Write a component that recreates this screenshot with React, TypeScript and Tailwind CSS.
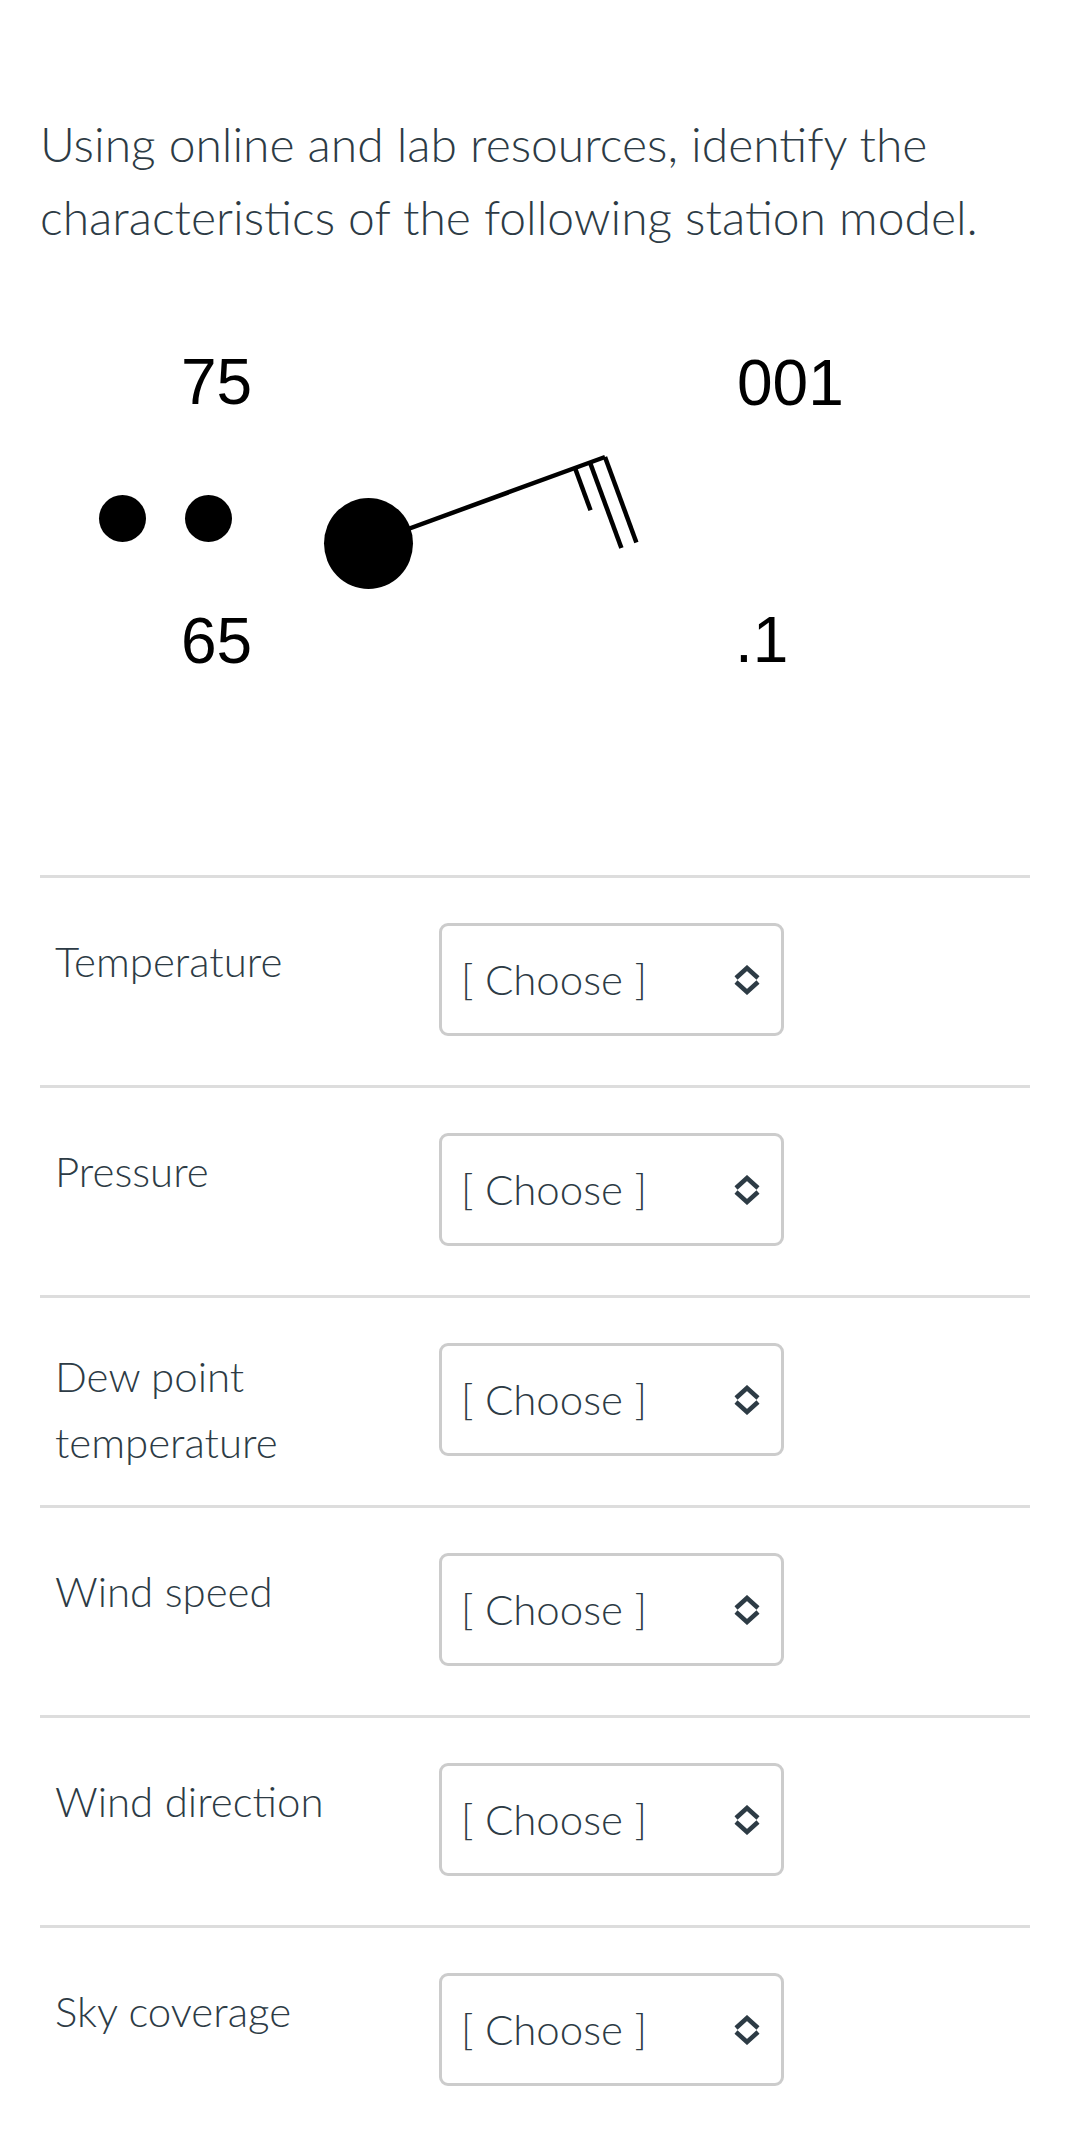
import React from "react";

const rows: { label: string; pt: string }[] = [
  { label: "Temperature", pt: "pt-[5px]" },
  { label: "Pressure", pt: "pt-[5px]" },
  { label: "Dew point temperature", pt: "pt-0" },
  { label: "Wind speed", pt: "pt-[5px]" },
  { label: "Wind direction", pt: "pt-[5px]" },
  { label: "Sky coverage", pt: "pt-[5px]" },
];

function Chevrons() {
  return (
    <svg
      width="28"
      height="30"
      viewBox="0 0 28 30"
      className="pointer-events-none absolute right-[23px] top-1/2 -translate-y-1/2"
      fill="none"
      stroke="#2d3b45"
      strokeWidth="4.5"
    >
      <polyline points="3,13 14,3 25,13" />
      <polyline points="3,17 14,27 25,17" />
    </svg>
  );
}

function StationModel() {
  const ox = 40;
  const oy = 300;
  const p = (x: number, y: number) => [x - ox, y - oy];
  const [c75x, c75y] = p(181, 404);
  const [c65x, c65y] = p(181, 663);
  const [c001x, c001y] = p(737, 405);
  const [c1x, c1y] = p(735, 662);
  const [d1x, d1y] = p(122.5, 518.5);
  const [d2x, d2y] = p(208.5, 518.5);
  const [cx, cy] = p(368.5, 543.5);
  const [ex, ey] = p(605, 457);
  const barb = (sx: number, sy: number, len: number) => {
    const [a, b] = p(sx, sy);
    return [a, b, a + 0.345 * len, b + 0.939 * len];
  };
  const b1 = barb(605, 457, 91);
  const b2 = barb(590, 462.5, 91);
  const b3 = barb(575, 468, 45);
  return (
    <svg width="1000" height="420" viewBox="0 0 1000 420" className="block">
      <g
        fill="#000"
        style={{ fontFamily: '"Liberation Sans", Arial, sans-serif' }}
        fontSize="64"
      >
        <text x={c75x} y={c75y}>75</text>
        <text x={c65x} y={c65y}>65</text>
        <text x={c001x} y={c001y}>001</text>
        <text x={c1x} y={c1y}>.1</text>
      </g>
      <circle cx={d1x} cy={d1y} r="23.5" fill="#000" />
      <circle cx={d2x} cy={d2y} r="23.5" fill="#000" />
      <g stroke="#000" strokeWidth="4.5">
        <line x1={cx} y1={cy} x2={ex} y2={ey} />
        <line x1={b1[0]} y1={b1[1]} x2={b1[2]} y2={b1[3]} />
        <line x1={b2[0]} y1={b2[1]} x2={b2[2]} y2={b2[3]} />
        <line x1={b3[0]} y1={b3[1]} x2={b3[2]} y2={b3[3]} />
      </g>
      <ellipse cx={cx} cy={cy} rx="44.5" ry="45.5" fill="#000" />
    </svg>
  );
}

export default function App() {
  return (
    <div
      className="min-h-[2153px] w-[1081px] bg-white text-[#2d3b45]"
      style={{ fontFamily: 'Lato, "Open Sans", sans-serif' }}
    >
      <div className="pl-[40px] pr-[51px] pt-[107px]">
        <p className="text-[48px] font-light leading-[73px]">
          Using online and lab resources, identify the characteristics of the
          following station model.
        </p>
        <div className="mt-[47px]">
          <StationModel />
        </div>
        <div className="mt-[155px] flex flex-col">
          {rows.map((r) => (
            <div
              key={r.label}
              className="flex h-[210px] items-start border-t-[3px] border-[#dddddd] pt-[45px]"
            >
              <div
                className={`w-[399px] pl-[15px] pr-[20px] text-[42px] font-light leading-[66px] ${r.pt}`}
              >
                {r.label}
              </div>
              <div className="relative h-[113px] w-[345px]">
                <select
                  className="h-full w-full appearance-none rounded-[9px] border-[3px] border-[#cccccc] bg-white pl-[19px] text-[42px] font-light text-[#2d3b45] outline-none"
                  style={{ fontFamily: 'Lato, "Open Sans", sans-serif' }}
                  defaultValue=""
                >
                  <option value="">[ Choose ]</option>
                </select>
                <Chevrons />
              </div>
            </div>
          ))}
        </div>
      </div>
    </div>
  );
}
